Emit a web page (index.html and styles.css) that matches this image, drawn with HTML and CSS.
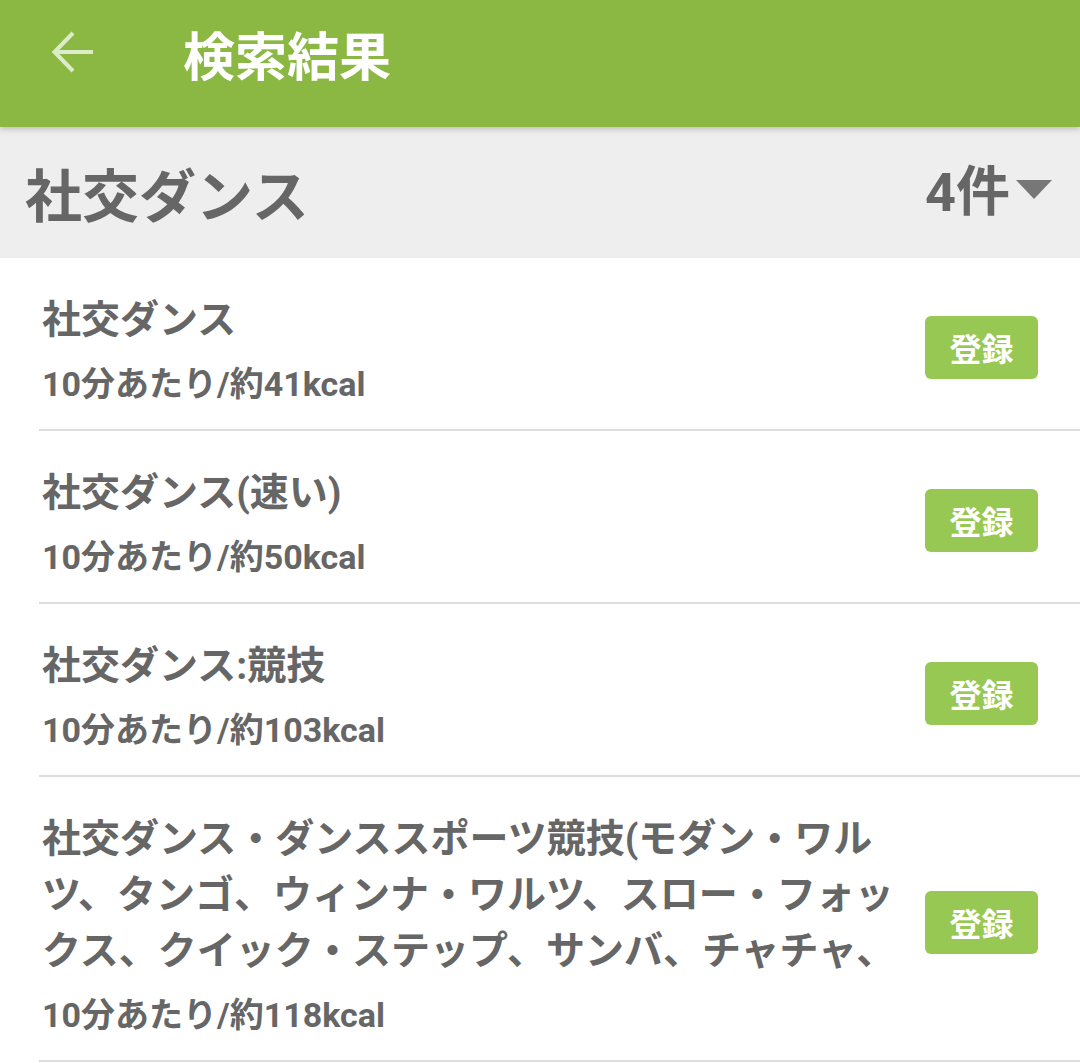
FILE: index.html
```html
<!DOCTYPE html>
<html lang="ja">
<head>
<meta charset="utf-8">
<title>検索結果</title>
<link rel="stylesheet" href="styles.css">
</head>
<body>
<header class="appbar">
  <svg class="back" width="44" height="44" viewBox="0 0 44 44" aria-hidden="true">
    <path d="M42 22H5M22 3L3.5 22L22 41" fill="none" stroke="#dcebc8" stroke-width="4"/>
  </svg>
  <h1 class="appbar-title">検索結果</h1>
</header>
<section class="summary">
  <h2 class="summary-title">社交ダンス</h2>
  <div class="summary-count">4件<span class="caret"></span></div>
</section>
<ul class="results">
  <li class="item">
    <div class="item-text">
      <div class="item-name">社交ダンス</div>
      <div class="item-kcal">10分あたり/約41kcal</div>
    </div>
    <button class="reg">登録</button>
  </li>
  <li class="item">
    <div class="item-text">
      <div class="item-name">社交ダンス(速い)</div>
      <div class="item-kcal">10分あたり/約50kcal</div>
    </div>
    <button class="reg">登録</button>
  </li>
  <li class="item">
    <div class="item-text">
      <div class="item-name">社交ダンス:競技</div>
      <div class="item-kcal">10分あたり/約103kcal</div>
    </div>
    <button class="reg">登録</button>
  </li>
  <li class="item">
    <div class="item-text">
      <div class="item-name">社交ダンス・ダンススポーツ競技(モダン・ワルツ、タンゴ、ウィンナ・ワルツ、スロー・フォックス、クイック・ステップ、サンバ、チャチャ、</div>
      <div class="item-kcal">10分あたり/約118kcal</div>
    </div>
    <button class="reg">登録</button>
  </li>
</ul>
</body>
</html>
```
FILE: styles.css
```css
* { box-sizing: border-box; }
html, body {
  margin: 0;
  padding: 0;
  background: #ffffff;
  font-family: "Roboto", "Noto Sans CJK JP", sans-serif;
  color: #666666;
}
.appbar {
  position: relative;
  z-index: 2;
  height: 127px;
  background: #8bb843;
  display: flex;
  align-items: center;
  padding-left: 51px;
  padding-bottom: 20px;
  box-shadow: 0 2px 6px rgba(0, 0, 0, 0.22);
}
.back {
  display: block;
  margin-top: -4px;
}
.appbar-title {
  margin: 0 0 0 88px;
  font-size: 52px;
  font-weight: 700;
  color: #ffffff;
  line-height: 1;
  font-family: "Noto Sans CJK JP", sans-serif;
}
.summary {
  height: 131px;
  background: #eeeeee;
  display: flex;
  align-items: center;
  justify-content: space-between;
  padding: 0 28px 0 25px;
}
.summary-title {
  margin: 0;
  font-size: 57px;
  font-weight: 700;
  line-height: 1;
  color: #666666;
  font-family: "Noto Sans CJK JP", sans-serif;
}
.summary-count {
  display: flex;
  align-items: center;
  font-size: 54px;
  font-weight: 700;
  line-height: 1;
  color: #666666;
}
.caret {
  width: 0;
  height: 0;
  margin-left: 6px;
  margin-top: -6px;
  border-left: 18px solid transparent;
  border-right: 18px solid transparent;
  border-top: 19px solid #777777;
}
.results {
  list-style: none;
  margin: 0;
  padding: 0;
}
.item {
  margin-left: 39px;
  display: flex;
  align-items: center;
  padding: 34px 42px 23px 3px;
  border-bottom: 2px solid #dddddd;
}
.item-text {
  flex: 1;
  min-width: 0;
  padding-right: 18px;
}
.item-name {
  font-size: 39px;
  font-weight: 700;
  line-height: 56px;
  max-height: 168px;
  overflow: hidden;
}
.item-kcal {
  margin-top: 14px;
  font-size: 34px;
  font-weight: 700;
  line-height: 44px;
}
.reg {
  flex: none;
  width: 113px;
  height: 63px;
  margin-top: -4px;
  border: none;
  border-radius: 6px;
  background: #97c853;
  color: #ffffff;
  font-family: "Noto Sans CJK JP", sans-serif;
  font-size: 32px;
  font-weight: 700;
  padding: 0;
}
```
